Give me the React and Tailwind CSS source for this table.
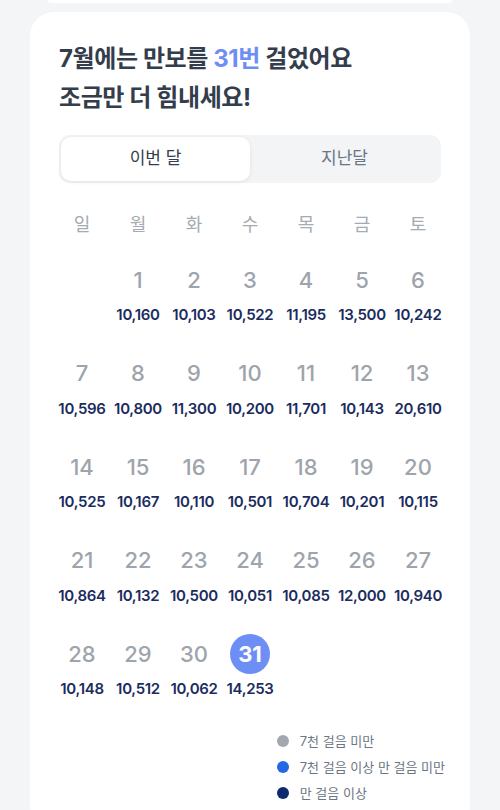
import { useState } from 'react';

const weekdays = ['일', '월', '화', '수', '목', '금', '토'];

const steps = [
  10160, 10103, 10522, 11195, 13500, 10242,
  10596, 10800, 11300, 10200, 11701, 10143, 20610,
  10525, 10167, 10110, 10501, 10704, 10201, 10115,
  10864, 10132, 10500, 10051, 10085, 12000, 10940,
  10148, 10512, 10062, 14253,
];

const legend = [
  { label: '7천 걸음 미만', color: 'bg-[#a3a8b0]' },
  { label: '7천 걸음 이상 만 걸음 미만', color: 'bg-[#2668e3]' },
  { label: '만 걸음 이상', color: 'bg-[#0d2a6e]' },
];

export default function App() {
  const [tab, setTab] = useState('this');
  const today = 31;

  // July starts on Monday, so one empty cell first
  const cells = [null, ...steps.map((s, i) => ({ day: i + 1, steps: s }))];

  return (
    <div
      className="min-h-screen bg-[#f3f5f7] pb-10"
      style={{ fontFamily: 'Inter, "Noto Sans CJK KR", sans-serif' }}
    >
      <div className="mx-[48px] h-[3px] rounded-b-[6px] bg-white" />

      <div className="mx-[30px] mt-[9px] rounded-[24px] bg-white px-[29px] pt-[27px] pb-6">
        <h1 className="text-[24px] font-bold leading-[39px] tracking-[-0.4px] text-[#333d4b]">
          7월에는 만보를 <span className="text-[#6d8ef5]">31번</span> 걸었어요
          <br />
          조금만 더 힘내세요!
        </h1>

        <div className="mt-[18px] flex h-[48px] rounded-[11px] bg-[#f2f4f6] p-[2px]">
          <button
            onClick={() => setTab('this')}
            className={`flex-1 rounded-[10px] text-[17px] ${
              tab === 'this' ? 'bg-white text-[#333d4b] shadow-[0_1px_4px_rgba(0,0,0,0.08)]' : 'text-[#6b7684]'
            }`}
          >
            이번 달
          </button>
          <button
            onClick={() => setTab('last')}
            className={`flex-1 rounded-[10px] text-[17px] ${
              tab === 'last' ? 'bg-white text-[#333d4b] shadow-[0_1px_4px_rgba(0,0,0,0.08)]' : 'text-[#6b7684]'
            }`}
          >
            지난달
          </button>
        </div>

        <div className="-mx-[5px] mt-[22px]">
          <div className="grid h-[55px] grid-cols-7">
            {weekdays.map((w) => (
              <div key={w} className="text-center text-[18px] leading-[40px] text-[#a5abb2]">
                {w}
              </div>
            ))}
          </div>

          <div className="grid grid-cols-7">
            {cells.map((c, i) =>
              c ? (
                <div key={i} className="flex h-[93.5px] flex-col items-center">
                  <div className="flex h-[40px] items-center justify-center">
                    {c.day === today ? (
                      <span className="flex h-[40px] w-[40px] items-center justify-center rounded-full bg-[#6d8ef5] text-[22px] font-bold text-white">
                        {c.day}
                      </span>
                    ) : (
                      <span className="text-[22px] font-medium text-[#9ea4ab]">{c.day}</span>
                    )}
                  </div>
                  <div className="mt-[5px] text-[15px] font-semibold leading-[20px] tracking-[-0.3px] text-[#1b2c5e]">
                    {c.steps.toLocaleString('en-US')}
                  </div>
                </div>
              ) : (
                <div key={i} className="h-[93.5px]" />
              )
            )}
          </div>
        </div>

        <div className="-mr-[4px] flex justify-end">
          <ul>
            {legend.map((l) => (
              <li key={l.label} className="flex items-center gap-[11px] text-[13px] leading-[26px] text-[#6b7684]">
                <span className={`h-[12px] w-[12px] rounded-full ${l.color}`} />
                {l.label}
              </li>
            ))}
          </ul>
        </div>
      </div>
    </div>
  );
}
